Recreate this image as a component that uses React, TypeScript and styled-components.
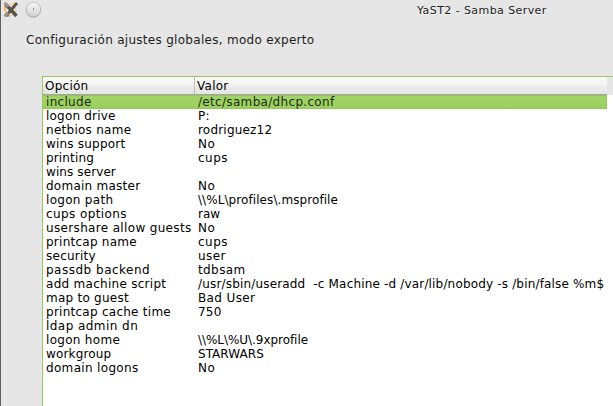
import React from 'react';
import styled, { createGlobalStyle } from 'styled-components';

const GlobalStyle = createGlobalStyle`
  body { margin: 0; background: #e6e6e6; overflow: hidden; }
`;

const Window = styled.main`
  box-sizing: border-box;
  width: 613px;
  height: 406px;
  overflow: hidden;
  display: flex;
  flex-direction: column;
  border-left: 1px solid #606060;
  background: #e6e6e6;
  color: #1c1c1c;
  font: 12px/14px "DejaVu Sans", sans-serif;
`;

const TitleBar = styled.header`
  display: flex;
  align-items: flex-start;
  height: 20px;
  flex: none;
`;

const AppIcon = styled.svg`
  width: 18px;
  height: 20px;
  margin-left: 1px;
`;

const MenuButton = styled.svg`
  width: 18px;
  height: 20px;
  margin-left: 4px;
`;

const WindowTitle = styled.span`
  margin: 4px 0 0 375px;
  font-size: 11px;
  line-height: 13px;
  letter-spacing: 0.42px;
  white-space: nowrap;
  text-shadow: 0 1px 0 #f6f6f6;
`;

const Heading = styled.h1`
  margin: 13px 0 29px 25px;
  font-size: 12px;
  font-weight: 400;
  line-height: 14px;
  letter-spacing: 0.29px;
  white-space: nowrap;
`;

const Table = styled.section`
  flex: 1;
  margin-left: 41px;
  border-top: 1px solid #94cb5c;
  border-left: 1px solid #94cb5c;
  background: #fff;
  color: #000;
`;

const HeaderStrip = styled.div`
  height: 18px;
  padding-right: 6px;
  background: #e6e6e6;
`;

const Columns = styled.div`
  box-sizing: border-box;
  display: grid;
  grid-template-columns: 152px 1fr;
  height: 18px;
  border-bottom: 1px solid #a3a3a3;
  background: linear-gradient(#fbfbfb, #f1f1f1 50%, #ebebeb 51%, #e6e6e6);
`;

const ColumnTitle = styled.div<{ $divided?: boolean }>`
  box-sizing: border-box;
  padding: 2px 0 0 2px;
  border-right: ${(p) => (p.$divided ? '1px solid #bcbcbc' : '0')};
  letter-spacing: 0.25px;
`;

const Row = styled.div<{ $selected?: boolean }>`
  box-sizing: border-box;
  display: grid;
  grid-template-columns: 152px 1fr;
  height: 14px;
  margin-right: 6px;
  background: ${(p) => (p.$selected ? 'linear-gradient(#a2d568, #9ad05f)' : 'transparent')};
  box-shadow: ${(p) => (p.$selected ? 'inset -1px 0 #91c658, inset 0 1px #91c658, inset 0 -1px #91c658' : 'none')};
  color: ${(p) => (p.$selected ? '#1e2b12' : '#000')};
`;

const Cell = styled.span<{ $tracking: number }>`
  padding-left: 3px;
  letter-spacing: ${(p) => p.$tracking}px;
  white-space: pre;
`;

type Setting = {
  option: string;
  value: string;
  /* Letter spacing of the option and of the value, in pixels. */
  tracking: [number, number];
};

const settings: Setting[] = [
  { option: 'include', value: '/etc/samba/dhcp.conf', tracking: [0.3, 0.32] },
  { option: 'logon drive', value: 'P:', tracking: [0.2, 0.3] },
  { option: 'netbios name', value: 'rodriguez12', tracking: [0.27, 0.2] },
  { option: 'wins support', value: 'No', tracking: [0.2, 0.5] },
  { option: 'printing', value: 'cups', tracking: [0.15, 0.5] },
  { option: 'wins server', value: '', tracking: [0.1, 0] },
  { option: 'domain master', value: 'No', tracking: [0.25, 0.5] },
  { option: 'logon path', value: '\\\\%L\\profiles\\.msprofile', tracking: [0.3, 0.08] },
  { option: 'cups options', value: 'raw', tracking: [0.4, 0] },
  { option: 'usershare allow guests', value: 'No', tracking: [0.34, 0.5] },
  { option: 'printcap name', value: 'cups', tracking: [0.25, 0.5] },
  { option: 'security', value: 'user', tracking: [0.25, 0.4] },
  { option: 'passdb backend', value: 'tdbsam', tracking: [0.5, 0.4] },
  {
    option: 'add machine script',
    value: '/usr/sbin/useradd  -c Machine -d /var/lib/nobody -s /bin/false %m$',
    tracking: [0.28, 0.17],
  },
  { option: 'map to guest', value: 'Bad User', tracking: [0.25, 0.38] },
  { option: 'printcap cache time', value: '750', tracking: [0.26, 0.2] },
  { option: 'ldap admin dn', value: '', tracking: [0.45, 0] },
  { option: 'logon home', value: '\\\\%L\\%U\\.9xprofile', tracking: [0.3, -0.05] },
  { option: 'workgroup', value: 'STARWARS', tracking: [0.15, 0.05] },
  { option: 'domain logons', value: 'No', tracking: [0.33, 0.5] },
];

export default function App() {
  return (
    <Window>
      <GlobalStyle />
      <TitleBar>
        <AppIcon viewBox="0 0 18 20">
          <circle cx="8.5" cy="10" r="5.5" fill="none" stroke="#ffc58f" strokeWidth="1.2" />
          <path d="M2.8 5.5v5M5 15.5l3 .8" stroke="#ff9c45" strokeWidth="1.4" />
          <path d="M10 4l3-.5" stroke="#f5d54a" strokeWidth="1.6" />
          <path d="M3.5 4L14.5 16" stroke="#55534d" strokeWidth="3.4" />
          <path d="M2.5 2.7l4 4" stroke="#a09e97" strokeWidth="2.6" />
          <path d="M15 3L4 16" stroke="#55534d" strokeWidth="2.8" />
          <path d="M6 12.5L2.8 16.6" stroke="#969389" strokeWidth="3.2" />
        </AppIcon>
        <MenuButton viewBox="0 0 18 20">
          <defs>
            <linearGradient id="buttonFace" x2="0" y2="1">
              <stop stopColor="#fafafa" />
              <stop offset="1" stopColor="#cecece" />
            </linearGradient>
          </defs>
          <circle cx="9.4" cy="10.2" r="7.6" fill="#bdbdbd" />
          <circle cx="9.4" cy="9.6" r="7.3" fill="url(#buttonFace)" stroke="#a9a9a9" strokeWidth=".7" />
          <rect x="9" y="8" width="1" height="2" fill="#888" />
        </MenuButton>
        <WindowTitle>YaST2 - Samba Server</WindowTitle>
      </TitleBar>
      <Heading>Configuración ajustes globales, modo experto</Heading>
      <Table>
        <HeaderStrip>
          <Columns>
            <ColumnTitle $divided>Opción</ColumnTitle>
            <ColumnTitle>Valor</ColumnTitle>
          </Columns>
        </HeaderStrip>
        {settings.map(({ option, value, tracking }, index) => (
          <Row key={option} $selected={index === 0}>
            <Cell $tracking={tracking[0]}>{option}</Cell>
            <Cell $tracking={tracking[1]}>{value}</Cell>
          </Row>
        ))}
      </Table>
    </Window>
  );
}
